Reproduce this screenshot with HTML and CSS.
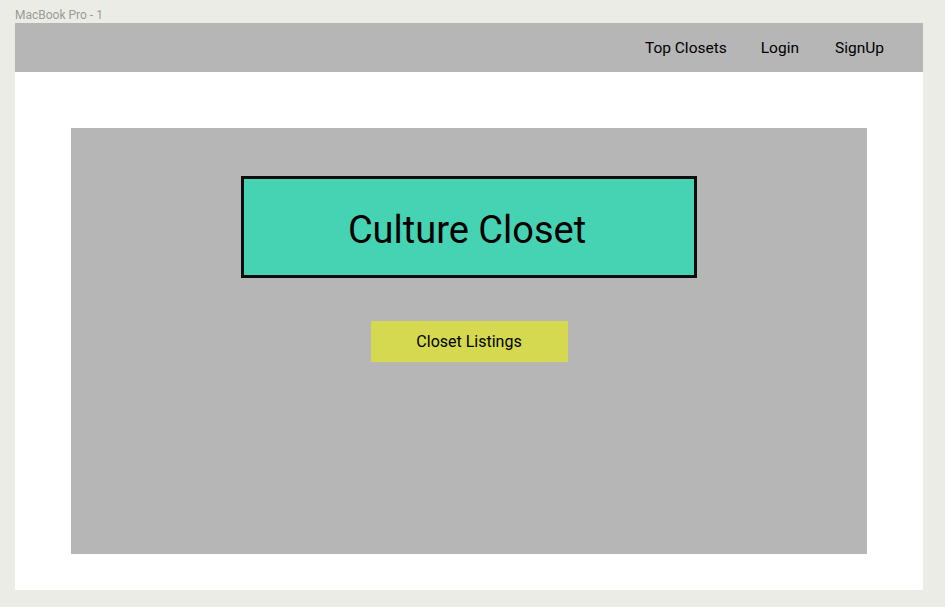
FILE: index.html
```html
<!DOCTYPE html>
<html>
<head>
<meta charset="utf-8">
<link rel="stylesheet" href="styles.css">
</head>
<body>
<div class="label">MacBook Pro - 1</div>
<div class="frame">
  <header class="nav">
    <a class="nav-link">Top Closets</a>
    <a class="nav-link">Login</a>
    <a class="nav-link">SignUp</a>
  </header>
  <main class="main">
    <section class="hero">
      <div class="title-box"><h1 class="title">Culture Closet</h1></div>
      <button class="listings">Closet Listings</button>
    </section>
  </main>
</div>
</body>
</html>
```
FILE: styles.css
```css
html, body {
  margin: 0;
  padding: 0;
}
body {
  background: #ecece6;
  font-family: Roboto, "Liberation Sans", sans-serif;
  width: 945px;
  height: 607px;
  overflow: hidden;
}
.label {
  height: 23px;
  box-sizing: border-box;
  padding: 8px 0 0 15px;
  font-size: 12px;
  line-height: 14px;
  color: #9a9a96;
}
.frame {
  margin-left: 15px;
  width: 908px;
  height: 567px;
  background: #fff;
  display: flex;
  flex-direction: column;
}
.nav {
  height: 49px;
  background: #b6b6b6;
  display: flex;
  align-items: center;
  justify-content: flex-end;
  gap: 34px;
  padding-right: 39px;
  box-sizing: border-box;
}
.nav-link {
  font-size: 15.5px;
  color: #000;
  padding-top: 1px;
}
.nav-link:nth-child(3) {
  margin-left: 2px;
}
.main {
  padding: 56px 56px 36px;
}
.hero {
  height: 426px;
  background: #b6b6b6;
  display: flex;
  flex-direction: column;
  align-items: center;
  padding-top: 48px;
  box-sizing: border-box;
}
.title-box {
  width: 456px;
  height: 102px;
  box-sizing: border-box;
  border: 3px solid #0c0c0c;
  background: #46d3b4;
  display: flex;
  align-items: center;
  justify-content: center;
}
.title {
  margin: 0;
  font-weight: 400;
  font-size: 38px;
  color: #000;
  padding-top: 5px;
  padding-right: 4px;
}
.listings {
  margin-top: 43px;
  width: 197px;
  height: 41px;
  border: none;
  background: #d4d94f;
  font-family: Roboto, "Liberation Sans", sans-serif;
  font-size: 16px;
  color: #000;
  padding: 0;
}
```
